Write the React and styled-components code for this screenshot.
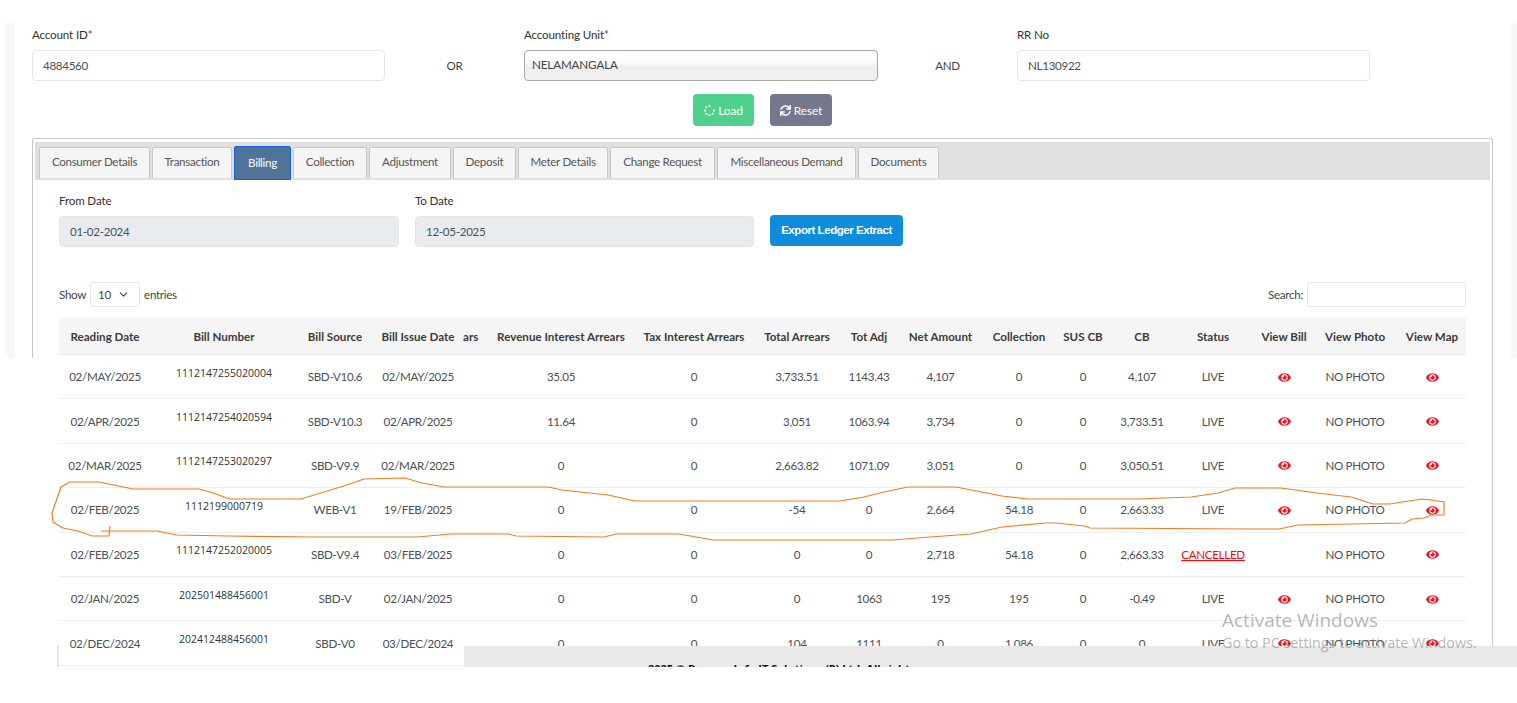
import React from "react";
import styled, { createGlobalStyle } from "styled-components";
import { FaEye, FaSync, FaSpinner } from "react-icons/fa";
import { FiChevronDown } from "react-icons/fi";

const GlobalStyle = createGlobalStyle`
  html, body {
    margin: 0;
    height: 100%;
    overflow: hidden;
    background: #fff;
  }
  body {
    font-family: Lato, "Open Sans", sans-serif;
    font-size: 11.6px;
    letter-spacing: -0.3px;
    color: #495057;
  }
  * { box-sizing: border-box; }
`;

const Page = styled.div`
  position: relative;
  width: 1517px;
  height: 703px;
  padding-top: 23px;
  overflow: hidden;
`;

const Shell = styled.div`
  height: 644px;
  margin-left: 5px;
  padding: 0 6px 0 10px;
  background: #f8f8fa;
  overflow: hidden;
`;

const Content = styled.div`
  height: 100%;
  background: #fff;
  padding: 5px 0 0 17px;
`;

const SearchRow = styled.div`
  display: grid;
  grid-template-columns: 353px 139px 354px 139px 353px;
  align-items: end;
`;

const Field = styled.div`
  display: flex;
  flex-direction: column;
  gap: 8px;
`;

const Label = styled.label`
  line-height: 14px;
  letter-spacing: -0.15px;
  color: #333;

  em {
    font-style: normal;
    color: #e01010;
  }
`;

const Input = styled.input`
  width: 100%;
  height: 31px;
  padding: 0 10px;
  font: inherit;
  letter-spacing: inherit;
  color: #495057;
  background: ${props => (props.$locked ? "#e9ecef" : "#fff")};
  border: 1px solid ${props => (props.$locked ? "#e4e7ea" : "#e6e6e6")};
  border-radius: 4px;
  outline: none;
`;

const ChosenBox = styled.div`
  height: 31px;
  padding: 0 7px 3px;
  display: flex;
  align-items: center;
  letter-spacing: -0.1px;
  color: #444;
  background: linear-gradient(#fff 0%, #fdfdfd 35%, #eee 55%, #f1f1f1 100%);
  border: 1px solid #a8a8a8;
  border-radius: 4px;
`;

const Joiner = styled.div`
  height: 31px;
  line-height: 31px;
  text-align: center;
  color: #444;
`;

const ButtonRow = styled.div`
  display: flex;
  justify-content: center;
  gap: 16px;
  width: 1461px;
  margin-top: 13px;
`;

const Button = styled.button`
  height: 32px;
  width: ${props => props.$w}px;
  display: flex;
  align-items: center;
  justify-content: center;
  gap: 3px;
  padding: 0;
  font: inherit;
  font-size: 12px;
  letter-spacing: -0.2px;
  color: #fff;
  background: ${props => props.$bg};
  border: none;
  border-radius: 4px;
`;

const Card = styled.div`
  width: 1461px;
  height: 560px;
  margin-top: 12px;
  padding: 3px 2px 0;
  border: 1px solid #c8c8c8;
  border-bottom: none;
  border-radius: 3px 3px 0 0;
`;

const TabBar = styled.div`
  height: 38px;
  padding: 4px 0 0 4px;
  display: flex;
  gap: 2px;
  background: #e2dfdf;
`;

const Tab = styled.div`
  width: ${props => props.$w}px;
  height: ${props => (props.$active ? "34px" : "31px")};
  margin-top: ${props => (props.$active ? "0" : "1px")};
  padding-bottom: ${props => (props.$active ? "1px" : "3px")};
  display: flex;
  align-items: center;
  justify-content: center;
  color: ${props => (props.$active ? "#fff" : "#555")};
  background: ${props => (props.$active ? "#4f7399" : "#f5f5f5")};
  border: 1px solid ${props => (props.$active ? "#0d5fe0" : "#c9c6c6")};
  border-bottom: ${props => (props.$active ? "1px solid #0d5fe0" : "none")};
  border-radius: 2px 2px 0 0;
`;

const Section = styled.div`
  padding: 14px 24px 0;
`;

const DateRow = styled.div`
  display: grid;
  grid-template-columns: 340px 339px 133px;
  column-gap: 16px;
  align-items: end;
`;

const ExportButton = styled.button`
  height: 31px;
  margin-bottom: 1px;
  padding: 0 0 2px;
  font-family: "Liberation Sans", Arial, sans-serif;
  font-size: 11.5px;
  font-weight: 700;
  letter-spacing: -0.45px;
  color: #fff;
  background: #0d8ddb;
  border: none;
  border-radius: 4px;
`;

const TableTools = styled.div`
  display: flex;
  justify-content: space-between;
  align-items: center;
  height: 25px;
  margin-top: 35px;
  color: #444;
`;

const ToolGroup = styled.div`
  display: flex;
  align-items: center;
  gap: 4px;
`;

const PageSize = styled.div`
  width: 50px;
  height: 25px;
  padding: 0 9px 0 7px;
  display: flex;
  align-items: center;
  justify-content: space-between;
  background: #fff;
  border: 1px solid #e6e6e6;
  border-radius: 3px;
`;

const SearchInput = styled.input`
  width: 159px;
  height: 25px;
  border: 1px solid #e6e6e6;
  border-radius: 3px;
  outline: none;
`;

const Table = styled.table`
  width: 1407px;
  margin-top: 11px;
  table-layout: fixed;
  border-collapse: separate;
  border-spacing: 0;
`;

const Th = styled.th`
  height: 37px;
  padding: 0 ${props => (props.$clip ? "8px" : "0")} 0 0;
  font-weight: 700;
  font-size: 11.6px;
  letter-spacing: 0;
  white-space: nowrap;
  text-align: ${props => (props.$clip ? "right" : "center")};
  color: #3b3b3b;
  background: #f5f5f5;
  border-bottom: 1px solid #e8e8e8;
`;

const Td = styled.td`
  height: 44.4px;
  padding: 0;
  text-align: center;
  white-space: nowrap;
  border-bottom: 1px solid #eee;
`;

const BillNo = styled.span`
  position: relative;
  top: -4px;
  font-family: "Open Sans", sans-serif;
  font-size: 10.5px;
  letter-spacing: 0;
  color: #333;
`;

const Cancelled = styled.a`
  color: #f00;
  text-decoration: underline;
`;

const Eye = styled(FaEye)`
  display: block;
  margin: 1px auto 0;
  font-size: 13px;
  color: #f5101c;
`;

// the lower half of the picture is pasted over the page, these blank out what is under it
const Patch = styled.div`
  position: absolute;
  top: 358px;
  left: ${props => props.$left}px;
  width: ${props => props.$w}px;
  height: 310px;
  background: #fff;
`;

const SheetEdge = styled.div`
  position: absolute;
  top: 645px;
  left: 57px;
  width: 2px;
  height: 22px;
  background: #e6e6e6;
`;

const Footer = styled.div`
  position: absolute;
  top: 646px;
  left: 464px;
  width: 1053px;
  height: 21px;
  padding: 16px 0 0 184px;
  overflow: hidden;
  font-family: "Open Sans", sans-serif;
  font-size: 11px;
  font-weight: 700;
  letter-spacing: 0;
  line-height: 14px;
  white-space: nowrap;
  color: #111;
  background: #e9e9e9;
`;

const Scribble = styled.svg`
  position: absolute;
  top: 0;
  left: 0;
  pointer-events: none;
`;

const Watermark = styled.div`
  position: absolute;
  top: 608px;
  left: 1222px;
  font-family: "Open Sans", sans-serif;
  letter-spacing: 0;
  white-space: nowrap;
  color: rgba(120, 120, 120, 0.55);
`;

const WatermarkTitle = styled.div`
  font-size: 19px;
  line-height: 25px;
`;

const WatermarkText = styled.div`
  font-size: 14.3px;
  line-height: 20px;
`;

const tabs = [
  ["Consumer Details", 111],
  ["Transaction", 80],
  ["Billing", 57],
  ["Collection", 74],
  ["Adjustment", 82],
  ["Deposit", 63],
  ["Meter Details", 90],
  ["Change Request", 105],
  ["Miscellaneous Demand", 139],
  ["Documents", 81],
];

const columns = [
  ["Reading Date", 92],
  ["Bill Number", 146],
  ["Bill Source", 76],
  ["Bill Issue Date", 90],
  ["ars", 22],
  ["Revenue Interest Arrears", 152],
  ["Tax Interest Arrears", 114],
  ["Total Arrears", 92],
  ["Tot Adj", 52],
  ["Net Amount", 91],
  ["Collection", 66],
  ["SUS CB", 62],
  ["CB", 56],
  ["Status", 86],
  ["View Bill", 56],
  ["View Photo", 86],
  ["View Map", 68],
];

const rows = [
  ["02/MAY/2025", "1112147255020004", "SBD-V10.6", "02/MAY/2025", "35.05", "0", "3,733.51", "1143.43", "4,107", "0", "0", "4,107", "LIVE"],
  ["02/APR/2025", "1112147254020594", "SBD-V10.3", "02/APR/2025", "11.64", "0", "3,051", "1063.94", "3,734", "0", "0", "3,733.51", "LIVE"],
  ["02/MAR/2025", "1112147253020297", "SBD-V9.9", "02/MAR/2025", "0", "0", "2,663.82", "1071.09", "3,051", "0", "0", "3,050.51", "LIVE"],
  ["02/FEB/2025", "1112199000719", "WEB-V1", "19/FEB/2025", "0", "0", "-54", "0", "2,664", "54.18", "0", "2,663.33", "LIVE"],
  ["02/FEB/2025", "1112147252020005", "SBD-V9.4", "03/FEB/2025", "0", "0", "0", "0", "2,718", "54.18", "0", "2,663.33", "CANCELLED"],
  ["02/JAN/2025", "202501488456001", "SBD-V", "02/JAN/2025", "0", "0", "0", "1063", "195", "195", "0", "-0.49", "LIVE"],
  ["02/DEC/2024", "202412488456001", "SBD-V0", "03/DEC/2024", "0", "0", "104", "1111", "0", "1,086", "0", "0", "LIVE"],
];

const scribble =
  "101,531 157,531 177,535 228,536 313,537 417,537 451,534 509,534 516,536 604,537 616,534 679,534 713,540 893,540 930,537 971,534 1002,527 1046,523 1056,523 1085,526 1090,528 1250,529 1279,529 1298,525 1405,523 1412,519 1424,518 1431,515 1444,515 1444,502 1431,500 1422,499 1402,502 1390,504 1373,504 1351,497 1317,493 1281,488 1235,488 1218,493 1191,497 1138,499 1027,499 1002,496 956,487 908,487 884,492 864,497 840,501 635,501 608,495 562,490 548,487 444,487 422,483 405,478 364,479 347,485 301,499 230,499 213,493 199,489 133,489 109,484 99,482 70,482 61,487 52,513 53,522 63,528 78,531 92,536 109,536 110,526";

const App = () => {
  return (
    <Page>
      <GlobalStyle />
      <Shell>
        <Content>
          <SearchRow>
            <Field>
              <Label>Account ID<em>*</em></Label>
              <Input readOnly value="4884560" />
            </Field>
            <Joiner>OR</Joiner>
            <Field>
              <Label>Accounting Unit<em>*</em></Label>
              <ChosenBox>NELAMANGALA</ChosenBox>
            </Field>
            <Joiner>AND</Joiner>
            <Field>
              <Label>RR No</Label>
              <Input readOnly value="NL130922" />
            </Field>
          </SearchRow>
          <ButtonRow>
            <Button $w={61} $bg="#4fd08c"><FaSpinner size={11} /> Load</Button>
            <Button $w={62} $bg="#74788d"><FaSync size={11} /> Reset</Button>
          </ButtonRow>
          <Card>
            <TabBar>
              {tabs.map(([name, w]) => (
                <Tab key={name} $w={w} $active={name === "Billing"}>{name}</Tab>
              ))}
            </TabBar>
            <Section>
              <DateRow>
                <Field>
                  <Label>From Date</Label>
                  <Input $locked readOnly value="01-02-2024" />
                </Field>
                <Field>
                  <Label>To Date</Label>
                  <Input $locked readOnly value="12-05-2025" />
                </Field>
                <ExportButton>Export Ledger Extract</ExportButton>
              </DateRow>
              <TableTools>
                <ToolGroup>
                  Show
                  <PageSize>10 <FiChevronDown size={13} /></PageSize>
                  entries
                </ToolGroup>
                <ToolGroup>
                  Search:
                  <SearchInput />
                </ToolGroup>
              </TableTools>
              <Table>
                <colgroup>
                  {columns.map(([name, w]) => (
                    <col key={name} width={w} />
                  ))}
                </colgroup>
                <thead>
                  <tr>
                    {columns.map(([name]) => (
                      <Th key={name} $clip={name === "ars"}>{name}</Th>
                    ))}
                  </tr>
                </thead>
                <tbody>
                  {rows.map(row => {
                    const [date, bill, source, issue, ...rest] = row;
                    const status = rest[rest.length - 1];
                    return (
                      <tr key={bill}>
                        <Td>{date}</Td>
                        <Td><BillNo>{bill}</BillNo></Td>
                        <Td>{source}</Td>
                        <Td>{issue}</Td>
                        <Td />
                        {rest.slice(0, -1).map((value, i) => (
                          <Td key={i}>{value}</Td>
                        ))}
                        <Td>
                          {status === "CANCELLED" ? <Cancelled>CANCELLED</Cancelled> : status}
                        </Td>
                        <Td>{status === "LIVE" && <Eye />}</Td>
                        <Td>NO PHOTO</Td>
                        <Td><Eye /></Td>
                      </tr>
                    );
                  })}
                </tbody>
              </Table>
            </Section>
          </Card>
        </Content>
      </Shell>
      <Patch $left={0} $w={57} />
      <Patch $left={1495} $w={22} />
      <SheetEdge />
      <Footer>2025 © Bescom Info IT Solutions (P) Ltd. All rights</Footer>
      <Scribble width="1517" height="703">
        <polyline points={scribble} fill="none" stroke="#f47b20" strokeWidth="1.2" />
      </Scribble>
      <Watermark>
        <WatermarkTitle>Activate Windows</WatermarkTitle>
        <WatermarkText>Go to PC settings to activate Windows.</WatermarkText>
      </Watermark>
    </Page>
  );
};

export default App;
